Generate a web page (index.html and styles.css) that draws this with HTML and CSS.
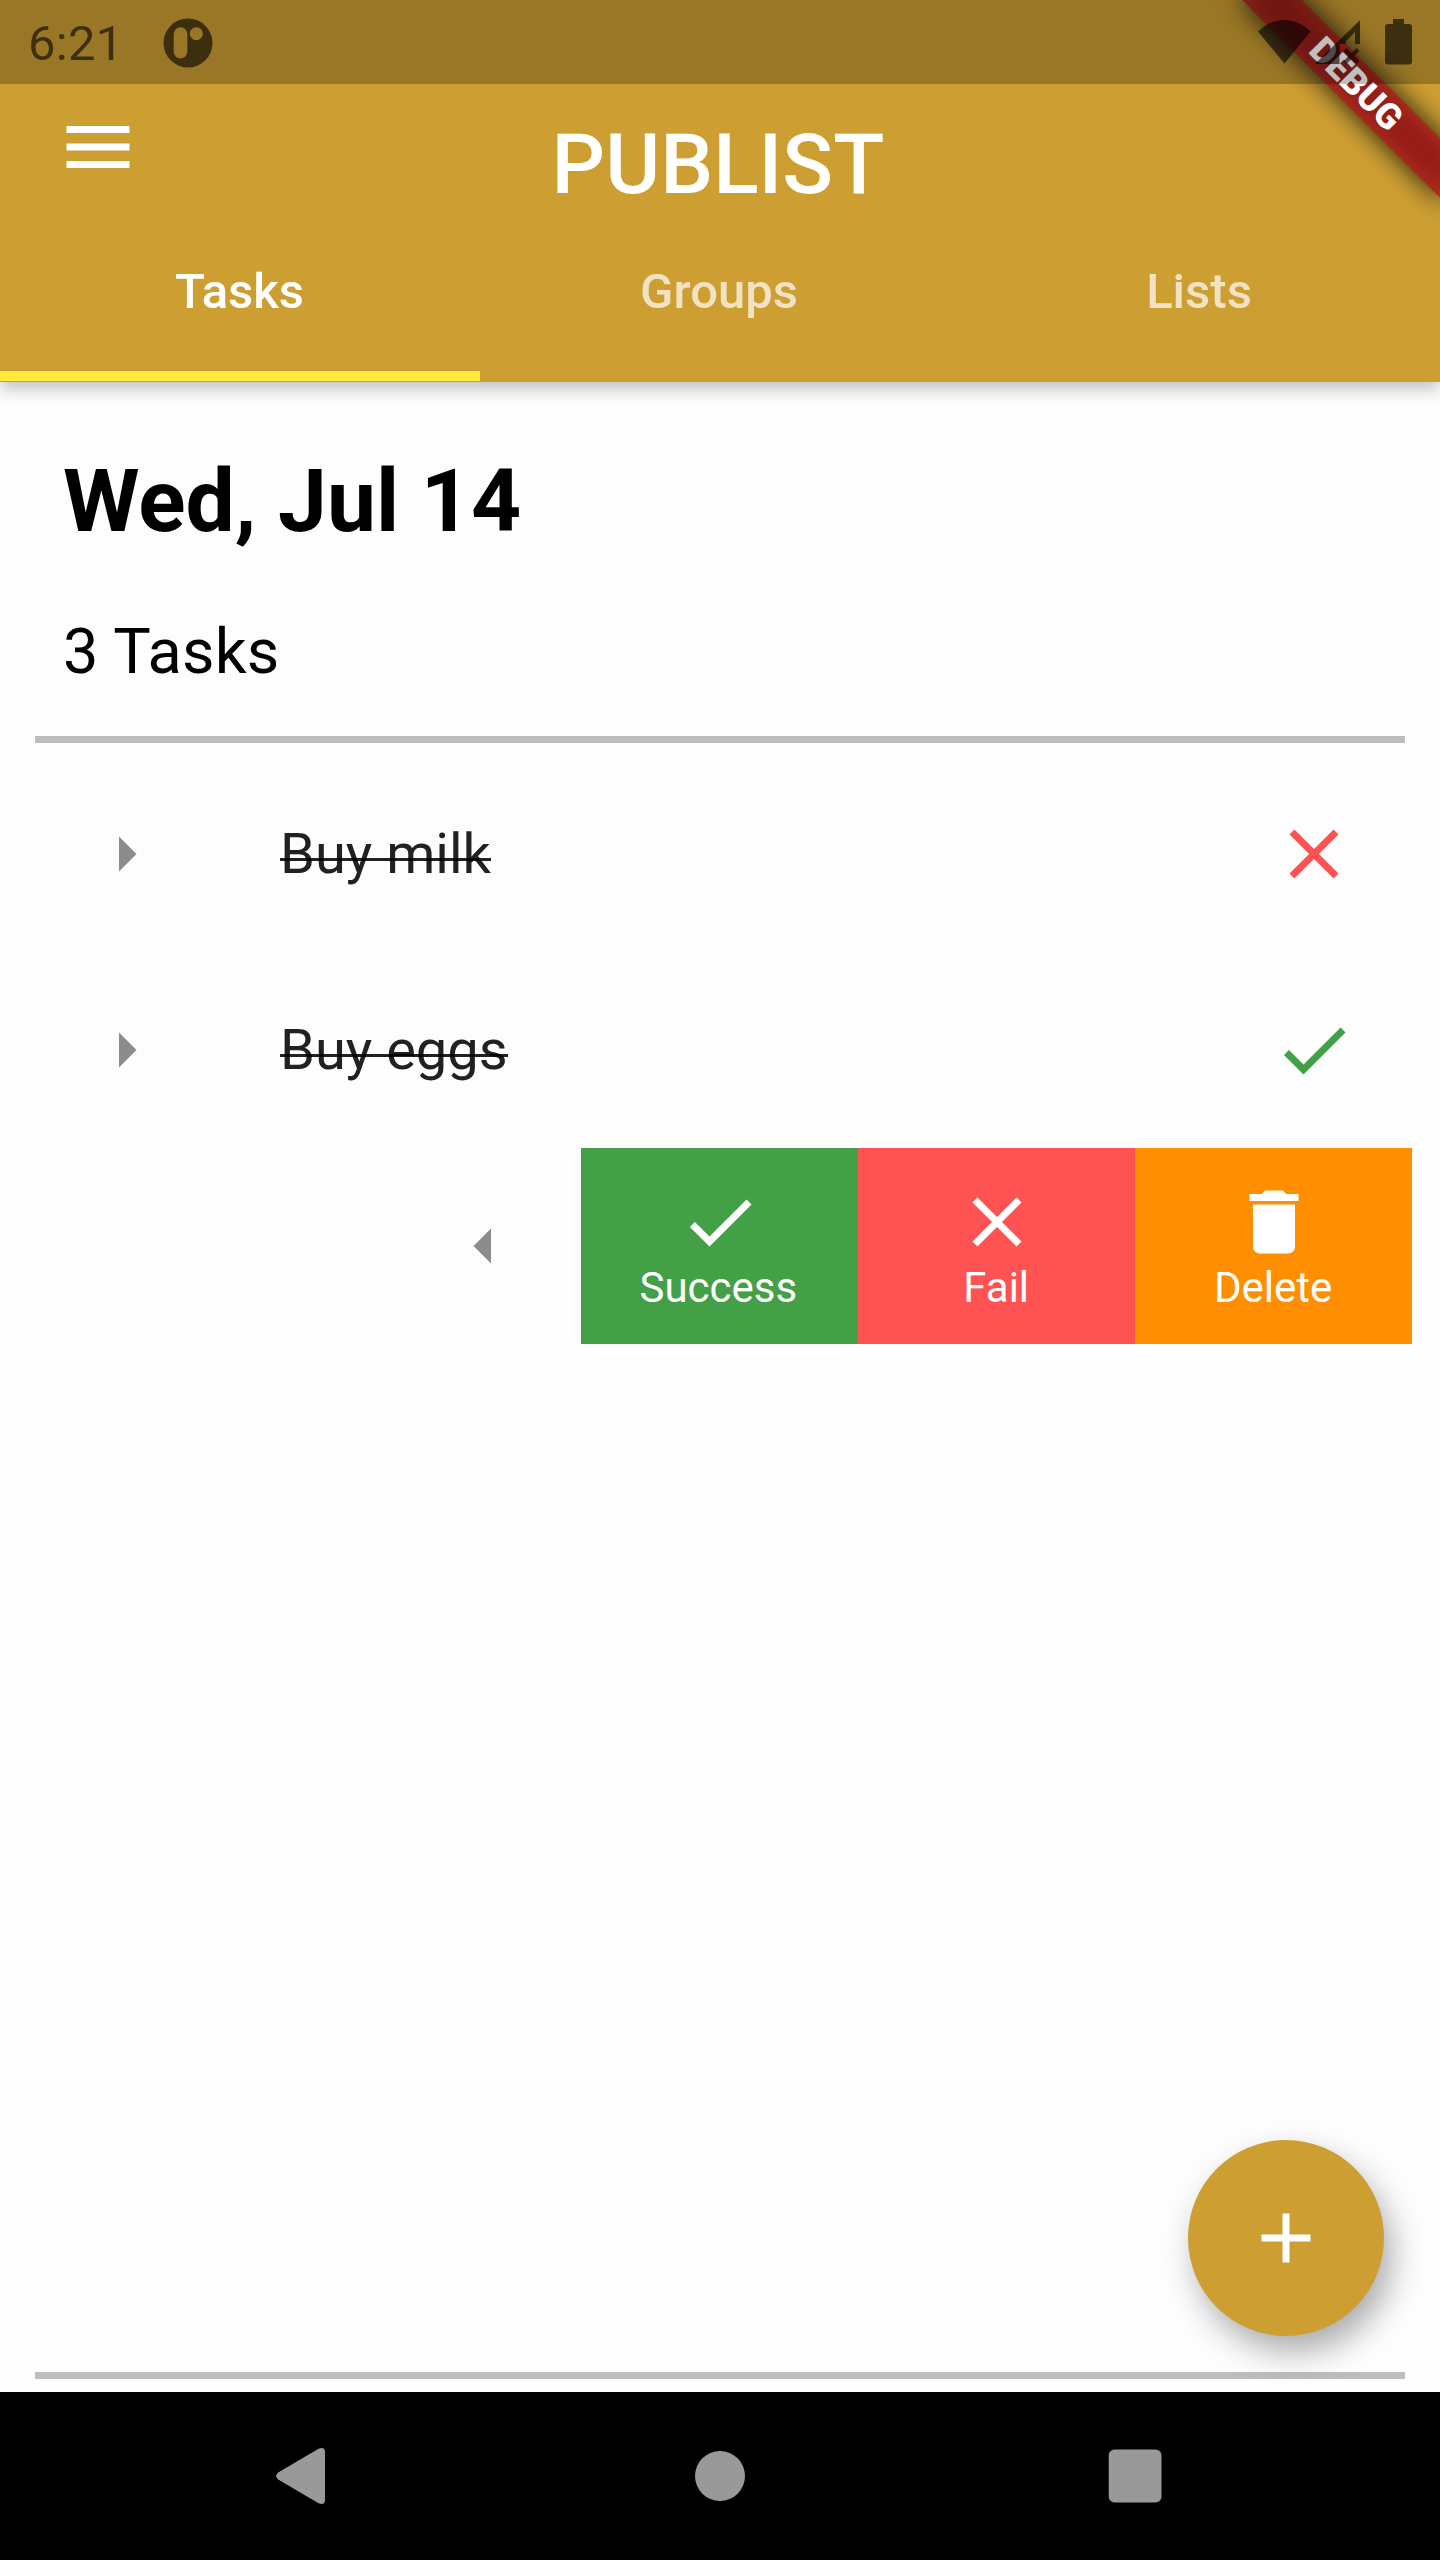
FILE: index.html
```html
<!DOCTYPE html>
<html lang="en">
<head>
<meta charset="utf-8">
<title>Publist</title>
<link rel="stylesheet" href="styles.css">
</head>
<body>
<div class="screen">
  <div class="status-bar">
    <span class="clock">6:21</span>
    <svg class="notification" width="50" height="50" viewBox="0 0 50 50"><path fill-rule="evenodd" d="M25 .5a24.5 24.5 0 1 1 0 49a24.5 24.5 0 0 1 0-49zM17.500 9.200a6.800 6.800 0 0 0-6.800 6.800v17.700a6.800 6.800 0 0 0 13.600 0V16a6.800 6.800 0 0 0-6.800-6.800zM33.300 9.200a6.500 6.500 0 1 0 0 13a6.500 6.500 0 0 0 0-13z"/></svg>
    <svg class="system-icons" width="156" height="48" viewBox="0 0 156 48">
      <path d="M0 13.500C15.500-2 37-2 52.700 13.500L26.500 45.500z"/>
      <path fill-rule="evenodd" d="M102 2V26H97V14L88 23V26H81.500V46H57z"/>
      <path d="M87 31.500L100 44.500M100 31.500L87 44.500" stroke="#000" stroke-width="4"/>
      <path d="M135 1h11v5h5a3 3 0 0 1 3 3v34.600a3 3 0 0 1-3 3h-21a3 3 0 0 1-3-3V9a3 3 0 0 1 3-3h5z"/>
    </svg>
  </div>

  <header class="app-bar">
    <div class="toolbar">
      <svg class="icon menu" viewBox="0 0 24 24"><path d="M3 18h18v-2H3v2zm0-5h18v-2H3v2zm0-7v2h18V6H3z"/></svg>
      <h1 class="title">PUBLIST</h1>
    </div>
    <nav class="tabs">
      <span class="tab active">Tasks</span>
      <span class="tab">Groups</span>
      <span class="tab">Lists</span>
    </nav>
  </header>

  <div class="banner-corner"><div class="banner">DEBUG</div></div>

  <main class="content">
    <h2 class="date">Wed, Jul 14</h2>
    <p class="count">3 Tasks</p>
    <div class="divider"></div>
    <ul class="task-list">
      <li class="task">
        <svg class="icon arrow" viewBox="0 0 24 24"><path d="M10 17l5-5-5-5v10z"/></svg>
        <s class="name">Buy milk</s>
        <svg class="icon failed" viewBox="0 0 24 24"><path d="M19 6.410L17.590 5 12 10.590 6.410 5 5 6.410 10.590 12 5 17.590 6.410 19 12 13.410 17.590 19 19 17.590 13.410 12z"/></svg>
      </li>
      <li class="task">
        <svg class="icon arrow" viewBox="0 0 24 24"><path d="M10 17l5-5-5-5v10z"/></svg>
        <s class="name">Buy eggs</s>
        <svg class="icon done" viewBox="0 0 24 24"><path d="M9 16.170L4.830 12l-1.420 1.410L9 19 21 7l-1.410-1.410z"/></svg>
      </li>
      <li class="task open">
        <svg class="icon arrow" viewBox="0 0 24 24"><path d="M14 7l-5 5 5 5V7z"/></svg>
        <div class="actions">
          <div class="action success">
            <svg class="icon" viewBox="0 0 24 24"><path d="M9 16.170L4.830 12l-1.420 1.410L9 19 21 7l-1.410-1.410z"/></svg>
            <span>Success</span>
          </div>
          <div class="action fail">
            <svg class="icon" viewBox="0 0 24 24"><path d="M19 6.410L17.590 5 12 10.590 6.410 5 5 6.410 10.590 12 5 17.590 6.410 19 12 13.410 17.590 19 19 17.590 13.410 12z"/></svg>
            <span>Fail</span>
          </div>
          <div class="action delete">
            <svg class="icon" viewBox="0 0 24 24"><path d="M6 19c0 1.100.900 2 2 2h8c1.100 0 2-.900 2-2V7H6v12zM19 4h-3.500l-1-1h-5l-1 1H5v2h14V4z"/></svg>
            <span>Delete</span>
          </div>
        </div>
      </li>
    </ul>
    <div class="divider bottom"></div>
    <div class="fab"><svg class="icon" viewBox="0 0 24 24"><path d="M19 13h-6v6h-2v-6H5v-2h6V5h2v6h6v2z"/></svg></div>
  </main>

  <footer class="system-nav">
    <svg width="56" height="56" viewBox="0 0 56 56"><path d="M2.200 24.600L42.500 .800Q49 -1.500 49 4V52Q49 57.500 42.500 55.200L2.200 31.400Q-2 28 2.200 24.600z"/></svg>
    <svg width="56" height="56" viewBox="0 0 56 56"><circle cx="28" cy="28" r="25"/></svg>
    <svg width="56" height="56" viewBox="0 0 56 56"><rect x="1.700" y="1.600" width="52.800" height="52.800" rx="6"/></svg>
  </footer>
</div>
</body>
</html>
```
FILE: styles.css
```css
* {
  box-sizing: border-box;
  margin: 0;
  padding: 0;
}

body {
  font-family: Roboto, sans-serif;
  color: #000;
  background: #fdfdfd;
}

svg {
  display: block;
  flex: none;
}

.screen {
  position: relative;
  display: flex;
  flex-direction: column;
  width: 1440px;
  height: 2560px;
  overflow: hidden;
  background: #fdfdfd;
}

.icon {
  width: 84px;
  height: 84px;
  fill: currentColor;
}

/* Translucent system bar over the app bar */
.status-bar {
  position: absolute;
  inset: 0 0 auto 0;
  z-index: 3;
  display: flex;
  align-items: flex-start;
  height: 84px;
  padding: 0 26px 0 28px;
  background: rgba(0, 0, 0, 0.25);
}

.clock {
  width: 134.500px;
  padding-top: 15px;
  font-size: 49px;
  line-height: 58px;
  letter-spacing: 0.300px;
  color: rgba(0, 0, 0, 0.6);
}

.notification {
  margin-top: 17.500px;
  opacity: 0.6;
}

.system-icons {
  margin: 18px 0 0 auto;
  opacity: 0.6;
}

.app-bar {
  position: relative;
  z-index: 1;
  flex: none;
  height: 381.500px;
  padding-top: 84px;
  color: #fff;
  background: #cd9f33;
  box-shadow: 0 7px 16px rgba(0, 0, 0, 0.24);
}

.toolbar {
  display: grid;
  grid-template-columns: 140px 1fr 140px;
  height: 150px;
  padding: 0 58px 0 56px;
}

.menu {
  margin-top: 21px;
}

.title {
  padding: 31px 2px 0 0;
  font-size: 84px;
  font-weight: 500;
  line-height: 99px;
  text-align: center;
}

.tabs {
  display: grid;
  grid-template-columns: repeat(3, 1fr);
  height: 147px;
}

.tab {
  padding: 29px 2px 0 0;
  font-size: 49px;
  font-weight: 500;
  line-height: 58px;
  text-align: center;
  color: rgba(255, 255, 255, 0.7);
}

.tab.active {
  padding-right: 1px;
  color: #fff;
  border-bottom: 10px solid #ffeb3b;
}

/* Diagonal ribbon in the top right corner */
.banner-corner {
  position: absolute;
  top: 0;
  right: 0;
  z-index: 2;
  width: 300px;
  height: 300px;
  overflow: hidden;
}

.banner {
  position: absolute;
  top: 63.150px;
  right: -55.850px;
  width: 280px;
  height: 42px;
  font-size: 35.700px;
  font-weight: 900;
  line-height: 42px;
  text-align: center;
  color: #fff;
  transform: rotate(45deg);
}

/* Soft shadow, with the translucent ribbon painted over it */
.banner::before,
.banner::after {
  content: "";
  position: absolute;
  inset: 0;
  z-index: -1;
}

.banner::before {
  background: rgba(0, 0, 0, 0.85);
  filter: blur(13.900px);
}

.banner::after {
  background: rgba(176, 28, 26, 0.8);
}

.content {
  position: relative;
  display: flex;
  flex: 1;
  flex-direction: column;
}

.date {
  padding: 68px 63px 0;
  font-size: 87.500px;
  font-weight: 700;
  line-height: 103px;
}

.count {
  padding: 62px 63px 0;
  font-size: 63px;
  line-height: 74px;
  letter-spacing: 0.200px;
}

.divider {
  flex: none;
  height: 7px;
  margin: 47px 35px 0;
  background: #bdbdbd;
}

.divider.bottom {
  margin: auto 35px 13.500px;
}

.task-list {
  padding: 13.500px 28px 0;
  list-style: none;
}

.task {
  display: flex;
  align-items: center;
  height: 196px;
  padding: 0 56px;
}

.arrow {
  color: #8c8c8c;
}

.name {
  position: relative;
  margin: 0 auto 0 112px;
  font-size: 56px;
  line-height: 66px;
  color: #212121;
  text-decoration: none;
}

/* Strike line, set a little below the browser's own */
.name::after {
  content: "";
  position: absolute;
  top: 37px;
  left: 0;
  width: 100%;
  height: 3px;
  background: rgba(0, 0, 0, 0.87);
}

.failed {
  color: #ff5252;
}

.done {
  color: #43a047;
}

.task.open {
  justify-content: flex-end;
  gap: 55.600px;
  padding: 0;
}

.actions {
  display: flex;
  width: 830.600px;
  height: 100%;
}

.action {
  display: flex;
  flex: 1;
  flex-direction: column;
  align-items: center;
  padding-top: 31.500px;
  font-size: 42px;
  line-height: 48px;
  color: #fff;
}

.action span {
  padding-right: 1px;
}

.success {
  background: #43a047;
}

.success span {
  padding-right: 3px;
}

.fail {
  background: #ff5252;
}

.delete {
  background: #ff8f00;
}

.fab {
  position: absolute;
  right: 56px;
  bottom: 56px;
  display: flex;
  align-items: center;
  justify-content: center;
  width: 196px;
  height: 196px;
  border-radius: 50%;
  color: #fff;
  background: #cd9f33;
  box-shadow: 8px 16px 32px rgba(0, 0, 0, 0.32);
}

.system-nav {
  display: flex;
  flex: none;
  align-items: center;
  justify-content: space-between;
  height: 168px;
  padding: 0 277px 0 276px;
  fill: #999;
  background: #000;
}
```
